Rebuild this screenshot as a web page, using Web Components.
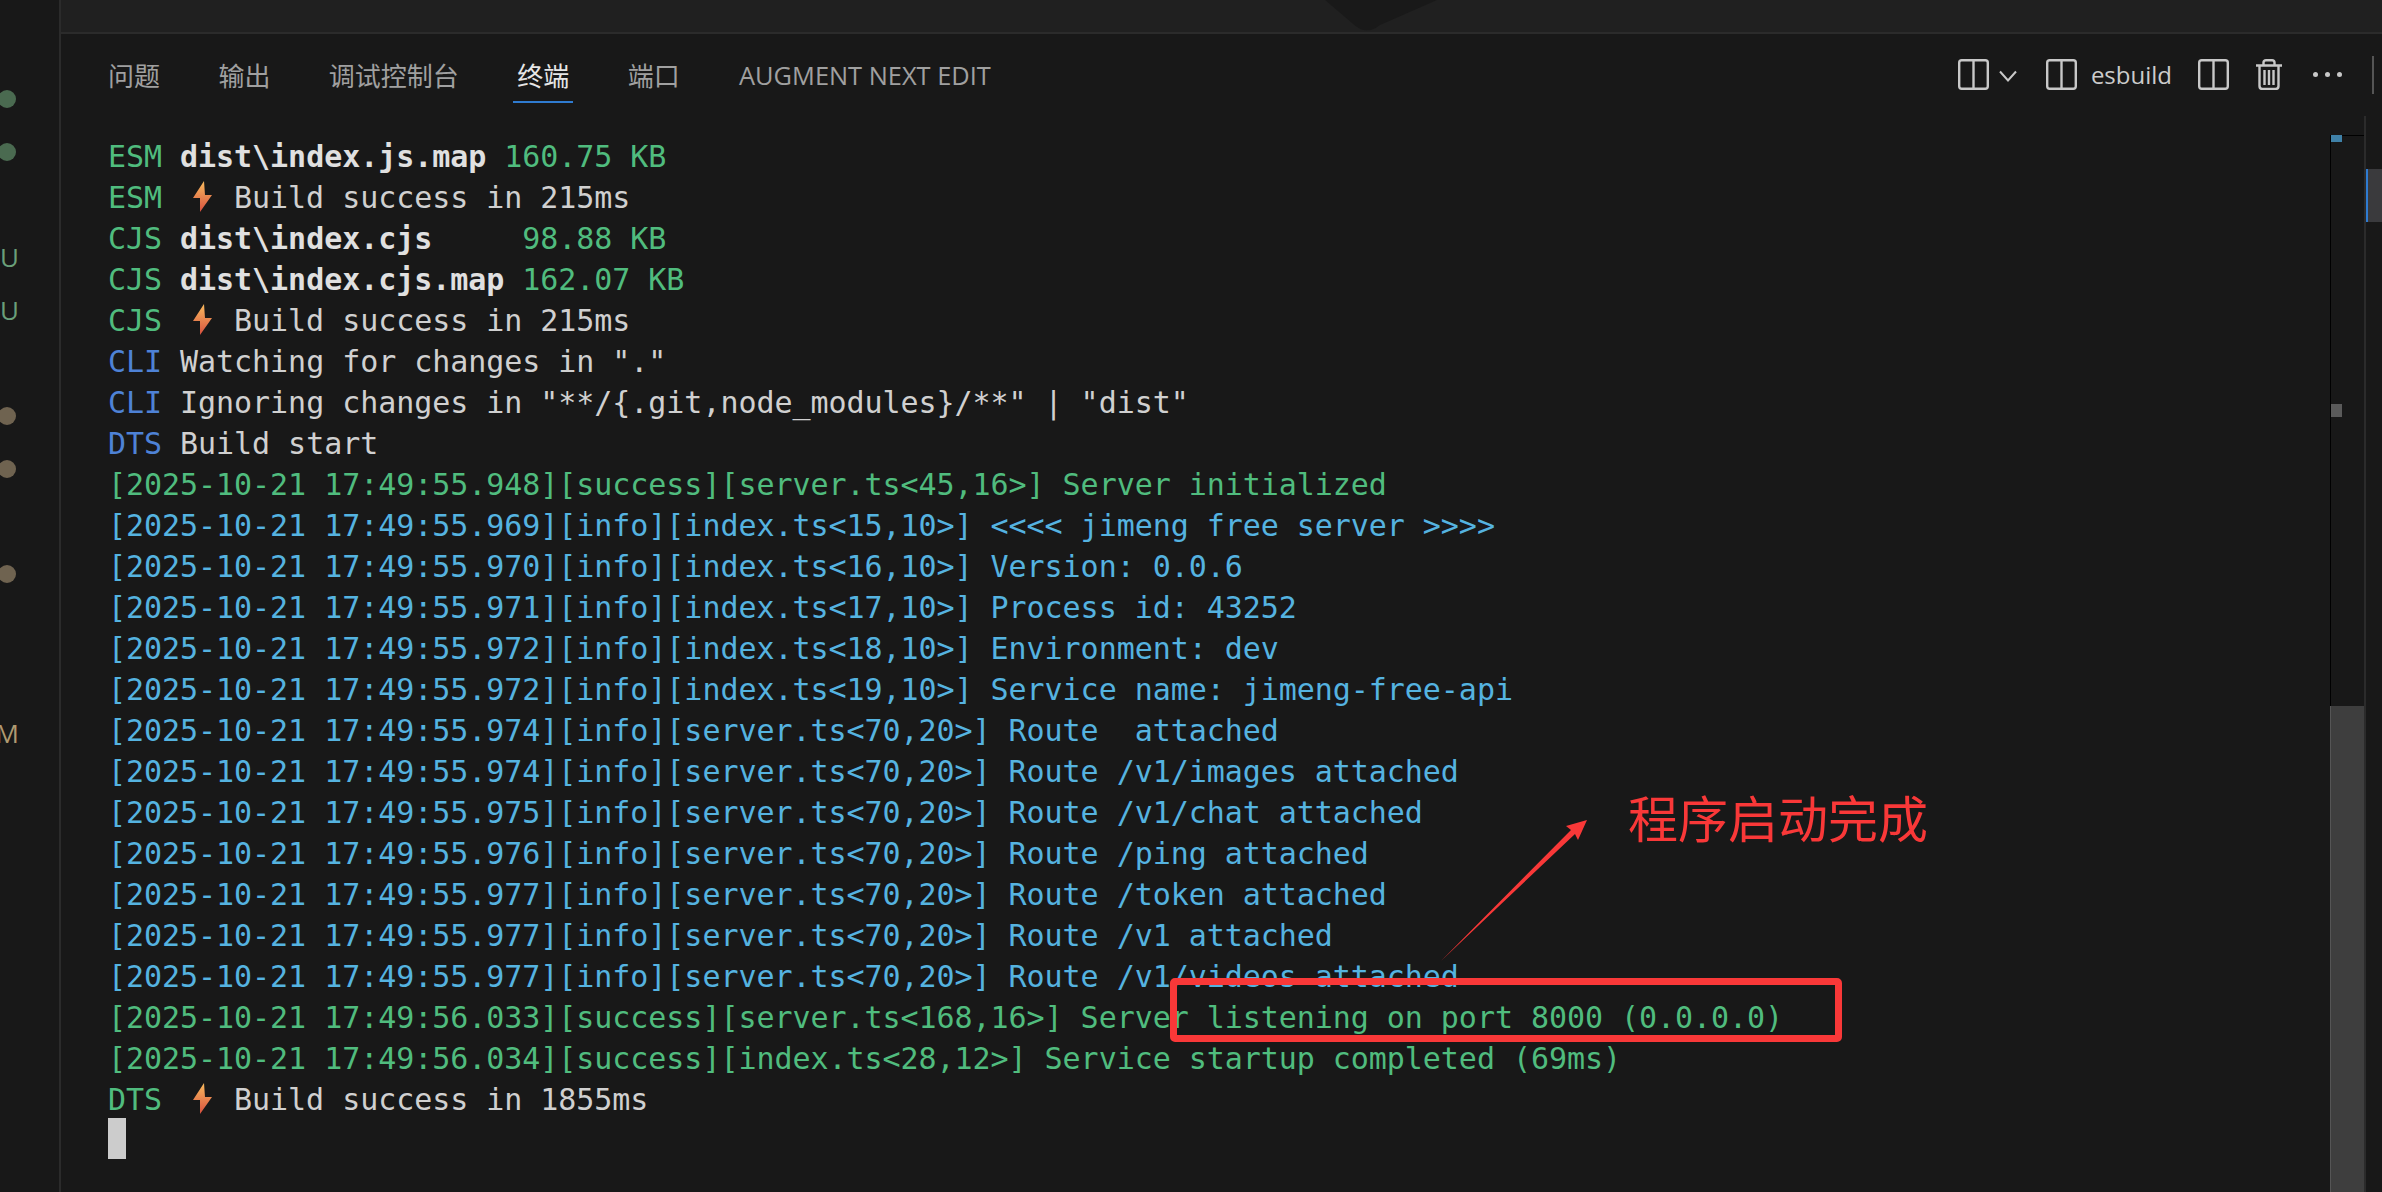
<!DOCTYPE html>
<html lang="zh">
<head>
<meta charset="utf-8">
<title>terminal</title>
<style>
  html, body { margin: 0; height: 100%; background: #181818; overflow: hidden; }
</style>
</head>
<body>
<vs-workbench>
  <vs-gutter slot="gutter"></vs-gutter>
  <vs-topbar slot="top"></vs-topbar>
  <vs-panel-header slot="header"></vs-panel-header>
  <vs-terminal slot="terminal"></vs-terminal>
  <vs-ruler slot="ruler"></vs-ruler>
  <vs-annotation slot="overlay"></vs-annotation>
</vs-workbench>

<script>
const MONO = `"DejaVu Sans Mono", "Liberation Mono", monospace`;
const UI = `"Open Sans", "Noto Sans CJK SC", sans-serif`;

class VsWorkbench extends HTMLElement {
  constructor() {
    super();
    this.attachShadow({mode: 'open'}).innerHTML = `
      <style>
        :host {
          display: grid;
          grid-template-columns: 59px 2px 1fr;
          width: 2382px;
          height: 1192px;
          position: relative;
          overflow: hidden;
          background: #181818;
        }
        #line { background: #2b2b2b; }
        #main {
          display: flex;
          flex-direction: column;
          min-width: 0;
        }
        #body {
          flex: 1;
          display: flex;
          min-height: 0;
        }
      </style>
      <slot name="gutter"></slot>
      <div id="line"></div>
      <div id="main">
        <slot name="top"></slot>
        <slot name="header"></slot>
        <div id="body">
          <slot name="terminal"></slot>
          <slot name="ruler"></slot>
        </div>
      </div>
      <slot name="overlay"></slot>
    `;
  }
}

// explorer decorations cut off by the left edge of the screenshot
class VsGutter extends HTMLElement {
  constructor() {
    super();
    const rows = [
      'dot:#4a6a50', 'dot:#4a6a50', '', 'U:#6a9f7a', 'U:#6a9f7a', '',
      'dot:#6f6350', 'dot:#6f6350', '', 'dot:#6f6350', '', '', 'M:#b09a70'
    ];
    const html = rows.map(r => {
      if(!r) return '<div class="row"></div>';
      const [kind, color] = r.split(':');
      if(kind === 'dot') return `<div class="row"><i style="background:${color}"></i></div>`;
      return `<div class="row"><b style="color:${color}">${kind}</b></div>`;
    }).join('');
    this.attachShadow({mode: 'open'}).innerHTML = `
      <style>
        :host {
          display: block;
          padding-top: 72.6px;
          overflow: hidden;
          font: 400 26px ${UI};
        }
        .row {
          height: 52.8px;
          display: flex;
          align-items: center;
          justify-content: flex-end;
          width: 19px;
          overflow: hidden;
        }
        i {
          flex: none;
          width: 18px;
          height: 18px;
          margin-right: 3px;
          border-radius: 50%;
        }
        b { flex: none; font-weight: 400; }
      </style>
      ${html}
    `;
  }
}

class VsTopbar extends HTMLElement {
  constructor() {
    super();
    this.attachShadow({mode: 'open'}).innerHTML = `
      <style>
        :host {
          display: flex;
          height: 34px;
          box-sizing: border-box;
          background: #202020;
          border-bottom: 2px solid #2b2b2b;
          padding-left: 1264px;
        }
        svg { display: block; }
      </style>
      <svg width="112" height="32" viewBox="0 0 112 32">
        <path d="M0 0 L27 23 Q36 32 46 30 Q50 29 55 25 L112 0 Z" fill="#191919"/>
      </svg>
    `;
  }
}

class VsIcon extends HTMLElement {
  static get observedAttributes() {
    return ['name'];
  }

  constructor() {
    super();
    this.attachShadow({mode: 'open'});
  }

  attributeChangedCallback() {
    const icons = {
      split: `<rect x="1.200" y="1.200" width="28.600" height="28.600" rx="2.500"/><path d="M15.500 1v29"/>`,
      chevron: `<path d="M1 12.500l8 9L17 12.500" stroke-width="2"/>`,
      trash: `<path d="M0 6.500h26M7.500 6V3.500Q7.500 1.200 10 1.200h6Q18.500 1.200 18.500 3.500V6M3.500 7v20q0 3 3 3h13q3 0 3-3V7M8.500 11v15M13 11v15M17.500 11v15"/>`
    };
    const sizes = {split: [31, 31], chevron: [18, 31], trash: [26, 31]};
    const name = this.getAttribute('name');
    const [w, h] = sizes[name];
    this.shadowRoot.innerHTML = `
      <style>
        :host { display: block; width: ${w}px; height: ${h}px; flex: none; }
        svg { display: block; fill: none; stroke: #c8c8c8; stroke-width: 2.4; }
      </style>
      <svg width="${w}" height="${h}" viewBox="0 0 ${w} ${h}">${icons[name]}</svg>
    `;
  }
}

class VsPanelHeader extends HTMLElement {
  constructor() {
    super();
    const tabs = ['问题', '输出', '调试控制台', '终端', '端口', 'AUGMENT NEXT EDIT'];
    this.attachShadow({mode: 'open'}).innerHTML = `
      <style>
        :host {
          display: flex;
          align-items: flex-start;
          height: 79px;
          padding-left: 43px;
          font: 400 26px ${UI};
          color: #a0a0a0;
          box-sizing: border-box;
        }
        #tabs {
          display: flex;
          gap: 50.4px;
        }
        .tab {
          padding: 12px 4px 0;
          height: 69px;
          box-sizing: border-box;
          display: flex;
          align-items: center;
          white-space: nowrap;
        }
        .tab.on {
          color: #e6e6e6;
          box-shadow: inset 0 -2px 0 #2f7bd0;
        }
        .latin { font-size: 25.4px; margin-left: 1px; }
        #tools {
          margin: 25px 0 0 auto;
          height: 31px;
          display: flex;
          align-items: center;
          color: #cccccc;
          padding-right: 8px;
        }
        #tools span { font-size: 24px; margin: 0 26px 0 13.500px; }
        .dots {
          display: flex;
          gap: 7px;
          margin: 0 30px 0 31px;
        }
        .dots i { width: 5px; height: 5px; border-radius: 50%; background: #c8c8c8; display: block; }
        .sep { width: 2px; height: 38px; background: #555; flex: none; }
      </style>
      <div id="tabs">
        ${tabs.map((t, i) => `<div class="tab${i === 3 ? ' on' : ''}${i === 5 ? ' latin' : ''}">${t}</div>`).join('')}
      </div>
      <div id="tools">
        <vs-icon name="split"></vs-icon>
        <vs-icon name="chevron" style="margin:0 29px 0 10px"></vs-icon>
        <vs-icon name="split"></vs-icon>
        <span>esbuild</span>
        <vs-icon name="split" style="margin-right:27px"></vs-icon>
        <vs-icon name="trash"></vs-icon>
        <div class="dots"><i></i><i></i><i></i></div>
        <div class="sep"></div>
      </div>
    `;
  }
}

const BOLT = `<svg class="bolt" width="36" height="41" viewBox="0 0 36 41"><defs><linearGradient id="b" x1="0" y1="0" x2="0" y2="1"><stop offset="0" stop-color="#f9bb5e"/><stop offset="1" stop-color="#d8503f"/></linearGradient></defs><path d="M24 6 L13 23 H20 L20 37 L32 20 H25 Z" fill="url(#b)"/></svg>`;

// [tag colour, text] tuples per terminal row
const G = 'g', B = 'b', L = 'l', W = 'w', S = 's';
const stamp = (c, t, lvl, src, msg) => [[c, `[2025-10-21 17:49:${t}][${lvl}][${src}] ${msg}`]];
const LINES = [
  [[G, 'ESM '], [S, 'dist\\index.js.map'], [G, ' 160.75 KB']],
  [[G, 'ESM '], ['bolt'], [W, ' Build success in 215ms']],
  [[G, 'CJS '], [S, 'dist\\index.cjs'], [G, '     98.88 KB']],
  [[G, 'CJS '], [S, 'dist\\index.cjs.map'], [G, ' 162.07 KB']],
  [[G, 'CJS '], ['bolt'], [W, ' Build success in 215ms']],
  [[L, 'CLI '], [W, 'Watching for changes in "."']],
  [[L, 'CLI '], [W, 'Ignoring changes in "**/{.git,node_modules}/**" | "dist"']],
  [[L, 'DTS '], [W, 'Build start']],
  stamp(G, '55.948', 'success', 'server.ts<45,16>', 'Server initialized'),
  stamp(B, '55.969', 'info', 'index.ts<15,10>', '<<<< jimeng free server >>>>'),
  stamp(B, '55.970', 'info', 'index.ts<16,10>', 'Version: 0.0.6'),
  stamp(B, '55.971', 'info', 'index.ts<17,10>', 'Process id: 43252'),
  stamp(B, '55.972', 'info', 'index.ts<18,10>', 'Environment: dev'),
  stamp(B, '55.972', 'info', 'index.ts<19,10>', 'Service name: jimeng-free-api'),
  stamp(B, '55.974', 'info', 'server.ts<70,20>', 'Route  attached'),
  stamp(B, '55.974', 'info', 'server.ts<70,20>', 'Route /v1/images attached'),
  stamp(B, '55.975', 'info', 'server.ts<70,20>', 'Route /v1/chat attached'),
  stamp(B, '55.976', 'info', 'server.ts<70,20>', 'Route /ping attached'),
  stamp(B, '55.977', 'info', 'server.ts<70,20>', 'Route /token attached'),
  stamp(B, '55.977', 'info', 'server.ts<70,20>', 'Route /v1 attached'),
  stamp(B, '55.977', 'info', 'server.ts<70,20>', 'Route /v1/videos attached'),
  stamp(G, '56.033', 'success', 'server.ts<168,16>', 'Server listening on port 8000 (0.0.0.0)'),
  stamp(G, '56.034', 'success', 'index.ts<28,12>', 'Service startup completed (69ms)'),
  [[G, 'DTS '], ['bolt'], [W, ' Build success in 1855ms']]
];

class VsTerminal extends HTMLElement {
  constructor() {
    super();
    const esc = s => s.replace(/&/g, '&amp;').replace(/</g, '&lt;').replace(/>/g, '&gt;');
    const rows = LINES.map(parts => {
      const inner = parts.map(([c, t]) => c === 'bolt' ? BOLT : `<span class="${c}">${esc(t)}</span>`).join('');
      return `<div class="row">${inner}</div>`;
    }).join('');
    this.attachShadow({mode: 'open'}).innerHTML = `
      <style>
        :host {
          display: block;
          flex: 1;
          min-width: 0;
          padding: 21px 0 0 47px;
          font: 400 30px/45px ${MONO};
          letter-spacing: -0.05px;
          color: #cccccc;
        }
        .row {
          height: 41px;
          white-space: pre;
          display: flex;
        }
        .bolt { flex: none; }
        .g { color: #50bc7e; }
        .b { color: #55b3e0; }
        .l { color: #4e82d6; }
        .w { color: #d0d0d0; }
        .s { color: #e0e0e0; font-weight: 700; }
        #cursor { width: 18px; height: 41px; background: #cccccc; }
      </style>
      ${rows}
      <div id="cursor"></div>
    `;
  }
}

// minimap-style overview ruler, scrollbar and the terminal list sliver
class VsRuler extends HTMLElement {
  constructor() {
    super();
    this.attachShadow({mode: 'open'}).innerHTML = `
      <style>
        :host {
          display: flex;
          flex: none;
          width: 52px;
        }
        #track {
          width: 34px;
          box-sizing: border-box;
          margin-top: 22px;
          border-top: 1px solid #000;
          border-left: 1px solid #000;
          display: flex;
          flex-direction: column;
        }
        #hit { width: 11px; height: 7px; margin-top: -1px; background: #3f81a8; }
        #find { width: 11px; height: 13px; margin-top: 262px; background: #5a5a5a; }
        #thumb {
          margin: auto 0 0 -1px;
          height: 486px;
          background: #3e3e3e;
          border-left: 1px solid #555;
        }
        #bar { width: 2px; margin-top: 3px; background: #2b2b2b; }
        #side {
          width: 16px;
          height: 53px;
          box-sizing: border-box;
          margin-top: 56px;
          background: #3a3a3d;
          border-left: 2px solid #2f7bd0;
        }
      </style>
      <div id="track">
        <div id="hit"></div>
        <div id="find"></div>
        <div id="thumb"></div>
      </div>
      <div id="bar"></div>
      <div id="side"></div>
    `;
  }
}

class VsAnnotation extends HTMLElement {
  constructor() {
    super();
    this.attachShadow({mode: 'open'}).innerHTML = `
      <style>
        :host { position: absolute; inset: 0; pointer-events: none; display: block; }
        #box {
          position: absolute;
          left: 1170px;
          top: 978px;
          width: 672px;
          height: 64px;
          box-sizing: border-box;
          border: 7px solid #f93838;
          border-radius: 5px;
        }
        #arrow { position: absolute; left: 0; top: 0; }
        #label {
          position: absolute;
          left: 1628px;
          top: 778px;
          font: 400 50px/76px "Noto Sans CJK SC", sans-serif;
          color: #f93838;
          white-space: nowrap;
        }
      </style>
      <svg id="arrow" width="2382" height="1192">
        <path d="M1441 961 L1571 830 L1566 826 L1587 820 L1578 840 L1575 834 Z" fill="#f93838"/>
      </svg>
      <div id="box"></div>
      <div id="label">程序启动完成</div>
    `;
  }
}

customElements.define('vs-workbench', VsWorkbench);
customElements.define('vs-gutter', VsGutter);
customElements.define('vs-topbar', VsTopbar);
customElements.define('vs-icon', VsIcon);
customElements.define('vs-panel-header', VsPanelHeader);
customElements.define('vs-terminal', VsTerminal);
customElements.define('vs-ruler', VsRuler);
customElements.define('vs-annotation', VsAnnotation);
</script>
</body>
</html>
